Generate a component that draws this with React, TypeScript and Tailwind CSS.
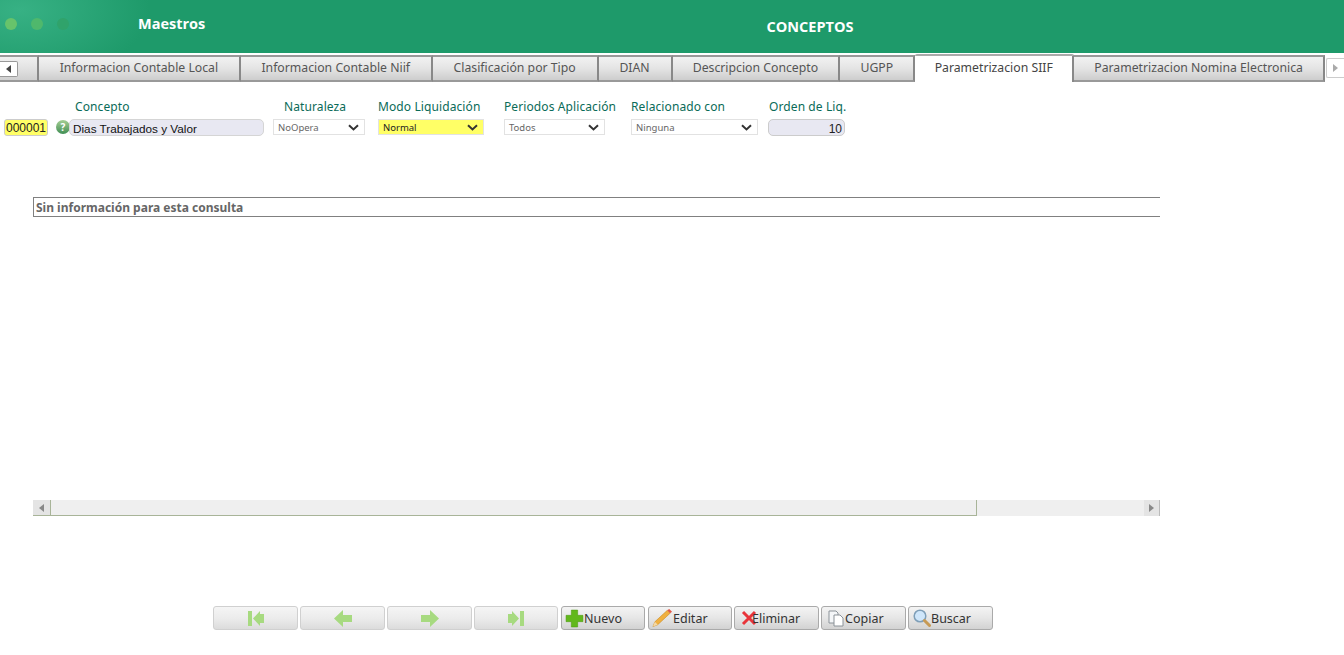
import React from "react";

const tabs: [string, string][] = [
  ["Informacion Contable Local", "w-[202px]"],
  ["Informacion Contable Niif", "w-[192px]"],
  ["Clasificación por Tipo", "w-[166px]"],
  ["DIAN", "w-[74px]"],
  ["Descripcion Concepto", "w-[168px]"],
  ["UGPP", "w-[75px]"],
];

function Chevron() {
  return (
    <svg width="11" height="7" viewBox="0 0 11 7" className="absolute right-[5px] top-[4px]">
      <path d="M1 1.2 L5.5 5.4 L10 1.2" fill="none" stroke="#333" strokeWidth="2" />
    </svg>
  );
}

function Select({ text, cls, bg }: { text: string; cls: string; bg?: string }) {
  return (
    <div className={`relative h-[16px] border border-[#e2e2e2] pl-[4px] text-[9.5px] leading-[15px] ${cls} ${bg ?? "bg-white text-[#666]"}`} style={{ fontFamily: '"Noto Sans", sans-serif' }}>
      {text}
      <Chevron />
    </div>
  );
}

function Label({ text, cls }: { text: string; cls: string }) {
  return <div className={`text-[12px] leading-[16px] tracking-[0.1px] text-[#0a6b58] ${cls}`}>{text}</div>;
}

function NavBtn({ children, cls }: { children: React.ReactNode; cls: string }) {
  return (
    <div className={`flex h-[24px] items-center justify-center rounded-[3px] border border-[#d0d0d0] bg-gradient-to-b from-[#f5f5f5] via-[#ececec] to-[#dcdcdc] ${cls}`}>
      {children}
    </div>
  );
}

function Btn({ icon, text, cls }: { icon: React.ReactNode; text: string; cls: string }) {
  return (
    <div className={`flex h-[24px] items-center rounded-[3px] border border-[#aaa] bg-gradient-to-b from-[#f4f4f4] via-[#e6e6e6] to-[#d2d2d2] text-[12.5px] text-[#333] ${cls}`}>
      {icon}
      <span className="pt-[2px]">{text}</span>
    </div>
  );
}

export default function App() {
  return (
    <div className="h-[655px] w-[1344px] overflow-hidden bg-white" style={{ fontFamily: '"Noto Sans", sans-serif' }}>
      <header className="flex h-[53px] bg-[#1e9a6a]">
        <div className="flex h-full w-[660px] items-center bg-[radial-gradient(ellipse_130px_70px_at_20px_10px,#37b184,#1e9a6a)] pb-[5px]">
          <span className="ml-[5px] h-[12px] w-[12px] rounded-full bg-[#67c36b]" />
          <span className="ml-[14px] h-[12px] w-[12px] rounded-full bg-[#4fb86c]" />
          <span className="ml-[14px] h-[12px] w-[12px] rounded-full bg-[#30a36b]" />
          <span className="ml-[69px] text-[14.5px] font-bold text-white" style={{ fontFamily: '"Open Sans", sans-serif' }}>Maestros</span>
        </div>
        <div className="w-[300px] pt-[17px] text-center text-[14.5px] leading-[20px] font-bold text-white" style={{ fontFamily: '"Open Sans", sans-serif' }}>
          CONCEPTOS
        </div>
      </header>

      <nav className="mt-[2px] flex h-[27px] text-[12.25px] text-[#555]">
        <div className="flex w-[39px] items-center border-y-2 border-r-2 border-y-[#999] border-r-[#888] bg-gradient-to-b from-[#f0f0f0] via-[#e2e2e2] to-[#cfcfcf]">
          <div className="flex h-[16px] w-[18px] items-center justify-center rounded-r-[2px] border border-l-0 border-[#999] bg-white">
            <span className="h-0 w-0 border-y-[4px] border-r-[5px] border-y-transparent border-r-[#444]" />
          </div>
        </div>
        <div className="flex w-[202px] items-center justify-center border-y-2 border-r-2 border-y-[#999] border-r-[#888] bg-gradient-to-b from-[#f2f2f2] via-[#e4e4e4] to-[#cdcdcd]">
          {tabs[0][0]}
        </div>
        <div className="flex w-[192px] items-center justify-center border-y-2 border-r-2 border-y-[#999] border-r-[#888] bg-gradient-to-b from-[#f2f2f2] via-[#e4e4e4] to-[#cdcdcd]">
          {tabs[1][0]}
        </div>
        <div className="flex w-[166px] items-center justify-center border-y-2 border-r-2 border-y-[#999] border-r-[#888] bg-gradient-to-b from-[#f2f2f2] via-[#e4e4e4] to-[#cdcdcd]">
          {tabs[2][0]}
        </div>
        <div className="flex w-[74px] items-center justify-center border-y-2 border-r-2 border-y-[#999] border-r-[#888] bg-gradient-to-b from-[#f2f2f2] via-[#e4e4e4] to-[#cdcdcd]">
          {tabs[3][0]}
        </div>
        <div className="flex w-[168px] items-center justify-center border-y-2 border-r-2 border-y-[#999] border-r-[#888] bg-gradient-to-b from-[#f2f2f2] via-[#e4e4e4] to-[#cdcdcd]">
          {tabs[4][0]}
        </div>
        <div className="flex w-[75px] items-center justify-center border-y-2 border-r-2 border-y-[#999] border-r-[#888] bg-gradient-to-b from-[#f2f2f2] via-[#e4e4e4] to-[#cdcdcd]">
          {tabs[5][0]}
        </div>
        <div className="-mt-[1px] flex h-[28px] w-[159px] items-center justify-center rounded-t-[2px] border-t-2 border-r-2 border-t-[#aaa] border-r-[#888] bg-white pb-[2px] text-[#444]">
          Parametrizacion SIIF
        </div>
        <div className="flex w-[251px] items-center justify-center border-y-2 border-r-2 border-y-[#999] border-r-[#888] bg-gradient-to-b from-[#f2f2f2] via-[#e4e4e4] to-[#cdcdcd]">
          Parametrizacion Nomina Electronica
        </div>
        <div className="ml-[1px] mt-[3px] flex h-[20px] w-[18px] items-center justify-center rounded-l-[2px] border border-r-0 border-[#ccc] bg-white">
          <span className="h-0 w-0 border-y-[4px] border-l-[5px] border-y-transparent border-l-[#aaa]" />
        </div>
      </nav>

      <section className="mt-[17px] flex h-[16px] items-center">
        <Label text="Concepto" cls="ml-[75px] w-[209px]" />
        <Label text="Naturaleza" cls="w-[94px]" />
        <Label text="Modo Liquidación" cls="w-[126px]" />
        <Label text="Periodos Aplicación" cls="w-[127px]" />
        <Label text="Relacionado con" cls="w-[138px]" />
        <Label text="Orden de Liq." cls="" />
      </section>

      <section className="mt-[4px] flex h-[17px] items-start">
        <div className="ml-[4px] h-[17px] w-[44px] rounded-[3px] border border-[#ccc] bg-[#ffff66] text-center text-[12px] leading-[16px] text-[#222]" style={{ fontFamily: '"Liberation Sans", sans-serif' }}>000001</div>
        <div className="ml-[8px] mt-[1px] flex h-[14px] w-[14px] items-center justify-center rounded-full bg-gradient-to-b from-[#a5cf95] to-[#3f8f55] text-[10px] leading-none font-bold text-white">?</div>
        <div className="-ml-[1px] h-[17px] w-[195px] rounded-[5px] border border-[#d5d5d5] bg-[#e8e8f2] pl-[3px] text-[11.75px] leading-[18px] text-[#111]" style={{ fontFamily: '"Liberation Sans", sans-serif' }}>Dias Trabajados y Valor</div>
        <Select text="NoOpera" cls="ml-[9px] w-[92px]" />
        <Select text="Normal" cls="ml-[13px] w-[106px]" bg="bg-[#ffff66] text-[#222]" />
        <Select text="Todos" cls="ml-[20px] w-[101px]" />
        <Select text="Ninguna" cls="ml-[26px] w-[127px]" />
        <div className="ml-[10px] h-[17px] w-[77px] rounded-[5px] border border-[#ccc] bg-[#e8e8f2] pr-[2px] text-right text-[12px] leading-[18px] text-[#222]" style={{ fontFamily: '"Liberation Sans", sans-serif' }}>10</div>
      </section>

      <div className="ml-[33px] mt-[61px] h-[20px] w-[1127px] border-y border-l border-[#808080] pl-[2px] text-[12px] leading-[20px] font-bold text-[#666]" style={{ fontFamily: '"Noto Sans", sans-serif' }}>
        Sin información para esta consulta
      </div>

      <div className="ml-[33px] mt-[283px] flex h-[16px] w-[1127px] bg-[#efefef]">
        <div className="flex w-[17px] items-center justify-center border-b border-[#a8b498] bg-[#e4e4e4]">
          <span className="h-0 w-0 border-y-[4px] border-r-[5px] border-y-transparent border-r-[#888]" />
        </div>
        <div className="w-[927px] border-r border-b border-l border-[#a8b498] bg-[#efefef]" />
        <div className="flex-1" />
        <div className="flex w-[16px] items-center justify-center border-r border-[#bbb] bg-[#e4e4e4]">
          <span className="h-0 w-0 border-y-[4px] border-l-[5px] border-y-transparent border-l-[#888]" />
        </div>
      </div>

      <footer className="ml-[213px] mt-[90px] flex gap-[2px]">
        <NavBtn cls="w-[85px]">
          <svg width="18" height="17" viewBox="0 0 18 17"><path d="M1 1h4v15H1zM6 8.5 13 1v3h4v9h-4v3z" fill="#a7da80" /></svg>
        </NavBtn>
        <NavBtn cls="w-[85px]">
          <svg width="18" height="17" viewBox="0 0 18 17"><path d="M0 8.5 9 0v5h9v7H9v5z" fill="#a7da80" /></svg>
        </NavBtn>
        <NavBtn cls="w-[85px]">
          <svg width="18" height="17" viewBox="0 0 18 17"><path d="M18 8.5 9 0v5H0v7h9v5z" fill="#a7da80" /></svg>
        </NavBtn>
        <NavBtn cls="w-[84px]">
          <svg width="18" height="17" viewBox="0 0 18 17"><path d="M17 1h-4v15h4zM12 8.5 5 1v3H1v9h4v3z" fill="#a7da80" /></svg>
        </NavBtn>
        <Btn cls="ml-[1px] w-[84px] pl-[3px]" text="Nuevo" icon={
          <svg width="19" height="19" viewBox="0 0 18 18"><path d="M6 1h6v5h5v6h-5v5H6v-5H1V6h5z" fill="#62b81c" stroke="#4d9a12" strokeWidth="0.5" /></svg>
        } />
        <Btn cls="ml-[1px] w-[84px] pl-[3px]" text="Editar" icon={
          <svg width="21" height="20" viewBox="0 0 22 20">
            <path d="M1 19 3 14 16 2l3 3L6 17z" fill="#f0b040" stroke="#c98a20" strokeWidth="0.6" />
            <path d="M16 2l2-1.5 3 3L19 5z" fill="#e25a4a" />
            <path d="M1 19l2-5 3 3z" fill="#f3d9a8" />
          </svg>
        } />
        <Btn cls="w-[85px] pl-[6px]" text="Eliminar" icon={
          <svg width="16" height="16" viewBox="0 0 15 16" className="mr-[-5px]"><path d="M1.5 2 13.5 14M13.5 2 1.5 14" stroke="#e8343a" strokeWidth="3" /></svg>
        } />
        <Btn cls="w-[85px] pl-[6px]" text="Copiar" icon={
          <svg width="17" height="17" viewBox="0 0 17 17">
            <path d="M1 1h7l2 2v10H1z" fill="#f4f6f8" stroke="#8b9298" />
            <path d="M6 5h6l3 3v8H6z" fill="#ffffff" stroke="#8b9298" />
          </svg>
        } />
        <Btn cls="w-[85px] pl-[4px]" text="Buscar" icon={
          <svg width="18" height="18" viewBox="0 0 18 18">
            <circle cx="7" cy="7" r="5.8" fill="#cfe6fa" stroke="#7f9fb8" strokeWidth="1.5" />
            <path d="M11.5 11.5l5 5" stroke="#c79a55" strokeWidth="3" strokeLinecap="round" />
          </svg>
        } />
      </footer>
    </div>
  );
}
